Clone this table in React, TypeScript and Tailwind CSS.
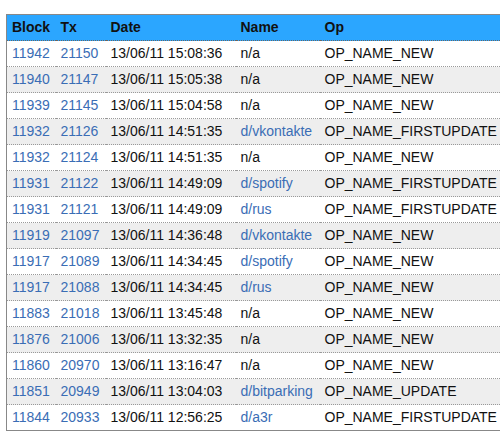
const rows: [string, string, string, string, string][] = [
  ["11942", "21150", "13/06/11 15:08:36", "n/a", "OP_NAME_NEW"],
  ["11940", "21147", "13/06/11 15:05:38", "n/a", "OP_NAME_NEW"],
  ["11939", "21145", "13/06/11 15:04:58", "n/a", "OP_NAME_NEW"],
  ["11932", "21126", "13/06/11 14:51:35", "d/vkontakte", "OP_NAME_FIRSTUPDATE"],
  ["11932", "21124", "13/06/11 14:51:35", "n/a", "OP_NAME_NEW"],
  ["11931", "21122", "13/06/11 14:49:09", "d/spotify", "OP_NAME_FIRSTUPDATE"],
  ["11931", "21121", "13/06/11 14:49:09", "d/rus", "OP_NAME_FIRSTUPDATE"],
  ["11919", "21097", "13/06/11 14:36:48", "d/vkontakte", "OP_NAME_NEW"],
  ["11917", "21089", "13/06/11 14:34:45", "d/spotify", "OP_NAME_NEW"],
  ["11917", "21088", "13/06/11 14:34:45", "d/rus", "OP_NAME_NEW"],
  ["11883", "21018", "13/06/11 13:45:48", "n/a", "OP_NAME_NEW"],
  ["11876", "21006", "13/06/11 13:32:35", "n/a", "OP_NAME_NEW"],
  ["11860", "20970", "13/06/11 13:16:47", "n/a", "OP_NAME_NEW"],
  ["11851", "20949", "13/06/11 13:04:03", "d/bitparking", "OP_NAME_UPDATE"],
  ["11844", "20933", "13/06/11 12:56:25", "d/a3r", "OP_NAME_FIRSTUPDATE"],
];

export default function App() {
  return (
    <div className="w-[500px] h-[442px] overflow-hidden bg-white font-['Liberation_Sans',Arial,sans-serif] text-[14px] text-[#111]">
      <div className="pt-[14px] pl-[6px]">
        <table className="w-[520px] table-fixed border-collapse border-t border-l border-b border-[#888] text-left">
          <thead>
            <tr className="bg-[#2ba6ff] border-b border-dotted border-[#666]">
              <th className="w-[49px] h-[26px] px-[5px] font-bold">Block</th>
              <th className="w-[50px] px-[5px] font-bold">Tx</th>
              <th className="w-[130px] px-[5px] font-bold">Date</th>
              <th className="w-[84px] px-[5px] font-bold">Name</th>
              <th className="px-[5px] font-bold">Op</th>
            </tr>
          </thead>
          <tbody>
            {rows.map((r, i) => (
              <tr
                key={i}
                className={
                  (i % 2 === 1 ? "bg-[#eeeeee] " : "bg-white ") +
                  (i < rows.length - 1 ? "border-b border-dotted border-[#999]" : "")
                }
              >
                <td className="h-[26px] px-[5px] text-[#3a6db5] whitespace-nowrap">{r[0]}</td>
                <td className="px-[5px] text-[#3a6db5] whitespace-nowrap">{r[1]}</td>
                <td className="px-[5px] whitespace-nowrap">{r[2]}</td>
                <td className={"px-[5px] whitespace-nowrap " + (r[3] === "n/a" ? "" : "text-[#3a6db5]")}>
                  {r[3]}
                </td>
                <td className="px-[5px] whitespace-nowrap">{r[4]}</td>
              </tr>
            ))}
          </tbody>
        </table>
      </div>
    </div>
  );
}
